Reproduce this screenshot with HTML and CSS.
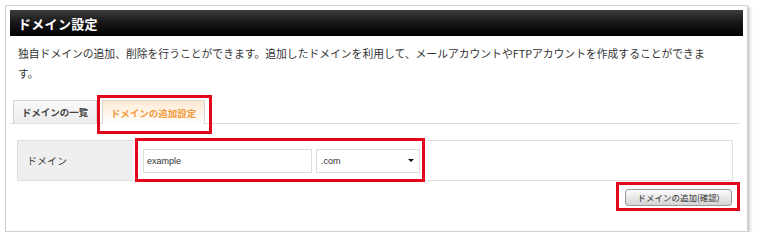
FILE: index.html
```html
<!DOCTYPE html>
<html lang="ja">
<head>
<meta charset="utf-8">
<title>ドメイン設定</title>
<link rel="stylesheet" href="styles.css">
</head>
<body>
<div class="panel">
  <div class="header">ドメイン設定</div>
  <p class="desc">独自ドメインの追加、削除を行うことができます。追加したドメインを利用して、メールアカウントやFTPアカウントを作成することができま<br>す。</p>
  <div class="tabs">
    <div class="tab">ドメインの一覧</div>
    <div class="tab tab-active mark mark-tab">ドメインの追加設定</div>
  </div>
  <div class="row">
    <div class="label">ドメイン</div>
    <div class="fields mark mark-fields">
      <input class="input" type="text" value="example">
      <div class="select"><span>.com</span><span class="arrow"></span></div>
    </div>
  </div>
  <div class="actions">
    <button class="btn mark mark-btn" type="button">ドメインの追加(確認)</button>
  </div>
</div>
</body>
</html>
```
FILE: styles.css
```css
html, body {
  margin: 0;
  padding: 0;
  background: #fff;
}
body {
  font-family: "Noto Sans CJK JP", "Noto Sans", sans-serif;
  color: #333;
}
.panel {
  margin: 5px 0 0 5px;
  width: 743px;
  height: 227px;
  box-sizing: border-box;
  border: 1px solid #cfcfcf;
  box-shadow: 2px 2px 3px rgba(0, 0, 0, 0.22);
  padding: 4px;
  background: #fff;
}
.header {
  height: 26px;
  box-sizing: border-box;
  padding-left: 8px;
  display: flex;
  align-items: center;
  background: linear-gradient(#3c3c3c, #1a1a1a 45%, #000);
  color: #fff;
  font-size: 13px;
  font-weight: bold;
  letter-spacing: 0.3px;
}
.desc {
  margin: 7px 0 0 8px;
  font-size: 10.8px;
  line-height: 20px;
  color: #333;
  white-space: nowrap;
}
.tabs {
  margin: 17px 3px 0 0;
  padding-left: 3px;
  display: flex;
  gap: 5px;
  border-bottom: 1px solid #dcdcdc;
}
.tab {
  height: 23px;
  box-sizing: border-box;
  border: 1px solid #d6d6d6;
  border-bottom: none;
  background: linear-gradient(#f9f9f9, #ececec);
  font-size: 9.5px;
  font-weight: bold;
  color: #444;
  display: flex;
  align-items: center;
  justify-content: center;
  width: 84px;
  margin-bottom: -1px;
}
.tab-active {
  width: 103px;
  background: linear-gradient(#fde9d2, #fff7ee 60%, #fff);
  color: #f39a3c;
  height: 24px;
}
.mark {
  position: relative;
}
.mark::after {
  content: "";
  position: absolute;
  border: 3px solid #e3061a;
  pointer-events: none;
}
.mark-tab::after {
  left: -6px;
  right: -8px;
  top: -6px;
  bottom: -10px;
}
.row {
  margin: 16px 0 0 7px;
  width: 716px;
  height: 41px;
  box-sizing: border-box;
  border: 1px solid #dedede;
  display: flex;
  align-items: center;
}
.label {
  width: 115px;
  align-self: stretch;
  background: #efefef;
  display: flex;
  align-items: center;
  padding-left: 9px;
  box-sizing: border-box;
  font-size: 10px;
  color: #444;
}
.fields {
  margin-left: 10px;
  display: flex;
  gap: 4px;
}
.mark-fields::after {
  left: -8px;
  right: -5px;
  top: -11px;
  bottom: -9px;
}
.input {
  width: 169px;
  height: 24px;
  box-sizing: border-box;
  border: 1px solid #dcdcdc;
  padding: 0 0 0 3px;
  margin: 0;
  font-family: "Liberation Sans", sans-serif;
  font-size: 9px;
  color: #333;
  background: #fff;
  outline: none;
}
.select {
  width: 104px;
  height: 24px;
  box-sizing: border-box;
  border: 1px solid #dcdcdc;
  background: #fff;
  display: flex;
  align-items: center;
  justify-content: space-between;
  padding: 0 5px 0 4px;
  font-family: "Liberation Sans", sans-serif;
  font-size: 9px;
  color: #333;
}
.arrow {
  width: 0;
  height: 0;
  border-left: 3px solid transparent;
  border-right: 3px solid transparent;
  border-top: 3px solid #111;
}
.actions {
  margin: 8px 0 0 7px;
  width: 715px;
  display: flex;
  justify-content: flex-end;
}
.btn {
  width: 107px;
  height: 17px;
  box-sizing: border-box;
  margin: 0;
  padding: 0;
  border: 1px solid #9a9a9a;
  border-radius: 3px;
  background: linear-gradient(#fbfbfb, #e6e6e6 55%, #d4d4d4);
  font-family: "Noto Sans CJK JP", sans-serif;
  font-size: 8.5px;
  color: #333;
  line-height: 15px;
}
.mark-btn::after {
  left: -10px;
  right: -9px;
  top: -8px;
  bottom: -6px;
}
```
